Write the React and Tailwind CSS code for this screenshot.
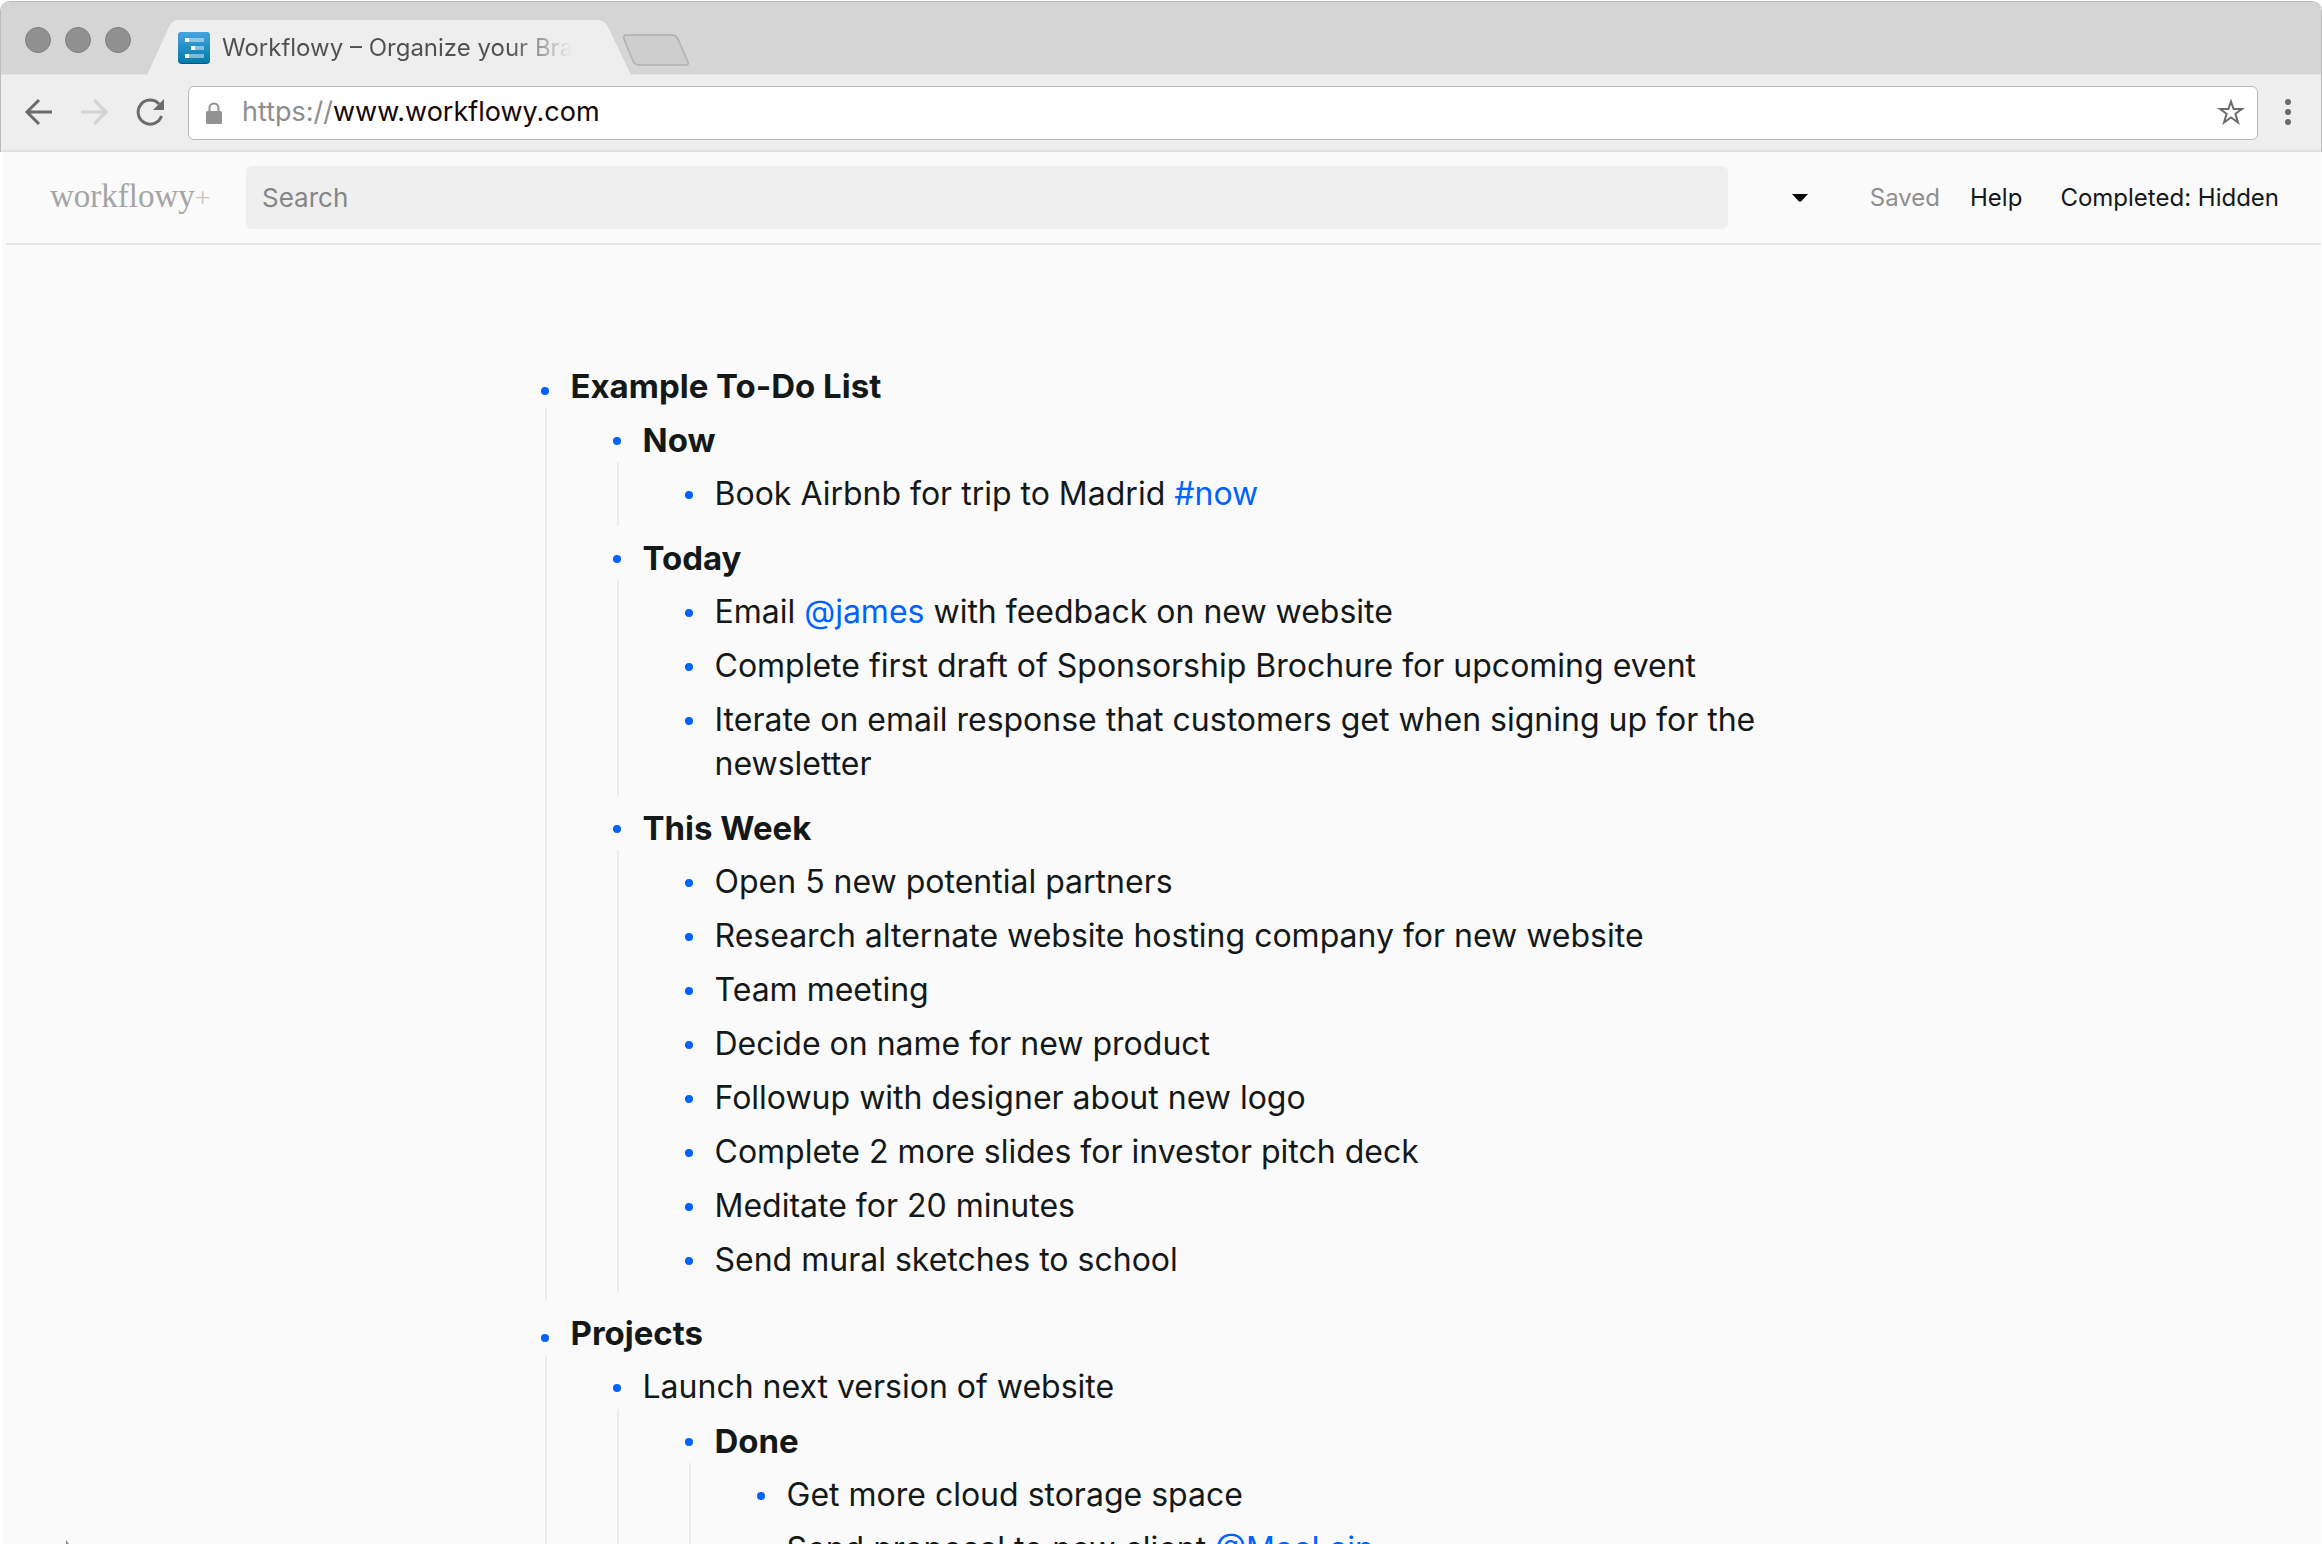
const outline = [
  {
    text: 'Example To-Do List', bold: true, children: [
      { text: 'Now', bold: true, children: [{ text: 'Book Airbnb for trip to Madrid #now' }] },
      {
        text: 'Today', bold: true, children: [
          { text: 'Email @james with feedback on new website' },
          { text: 'Complete first draft of Sponsorship Brochure for upcoming event' },
          { text: 'Iterate on email response that customers get when signing up for the newsletter' },
        ],
      },
      {
        text: 'This Week', bold: true, children: [
          { text: 'Open 5 new potential partners' },
          { text: 'Research alternate website hosting company for new website' },
          { text: 'Team meeting' },
          { text: 'Decide on name for new product' },
          { text: 'Followup with designer about new logo' },
          { text: 'Complete 2 more slides for investor pitch deck' },
          { text: 'Meditate for 20 minutes' },
          { text: 'Send mural sketches to school' },
        ],
      },
    ],
  },
  {
    text: 'Projects', bold: true, children: [
      {
        text: 'Launch next version of website', children: [
          {
            text: 'Done', bold: true, children: [
              { text: 'Get more cloud storage space' },
              { text: 'Send proposal to new client @MacLain' },
            ],
          },
        ],
      },
    ],
  },
];

function RichText({ text }) {
  return text.split(/([#@]\w+)/).map((part, i) =>
    /^[#@]/.test(part) ? <a key={i} href={'#' + part.slice(1)} className="text-[#0062ff]">{part}</a> : part
  );
}

function Item({ item, top }) {
  return (
    <li>
      <div className="flex items-start pt-[10px]">
        <button aria-label={'Zoom into ' + item.text} className={'mr-[22px] flex h-11 w-2 shrink-0 justify-center ' + (top ? 'pt-[23px]' : 'pt-[19px]')}>
          <span className="size-2 rounded-full bg-[#0062ff]" />
        </button>
        <p className={'min-w-0 ' + (item.bold ? 'text-[33px] leading-[44px] font-bold' : 'text-[32px] leading-[44px]')}><RichText text={item.text} /></p>
      </div>
      {item.children && (
        <ul className={'ml-1 border-l-2 border-[#ececec] pl-[66px] ' + (top ? 'pb-[9px]' : 'pb-[10px]')}>
          {item.children.map((c) => <Item key={c.text} item={c} />)}
        </ul>
      )}
    </li>
  );
}

function TabStrip() {
  return (
    <div className="flex h-[73px] items-end border-b border-[#e2e2e2] bg-[#d5d5d5] pl-6">
      <div className="flex gap-[14px] self-center pt-[3px]">
        {['Close', 'Minimize', 'Zoom'].map((n) => (
          <button key={n} aria-label={n} className="size-[26px] rounded-full border border-[#7e7e7e] bg-[#919191]" />
        ))}
      </div>
      <div className="relative -mb-px ml-4 h-[55px] w-[484px]">
        <svg viewBox="0 0 484 55" className="absolute inset-0 h-full w-full" aria-hidden="true">
          <path d="M0 55 L22 7 Q25 0 32 0 H450 Q458 0 461 7 L484 55Z" fill="#eeeeee" />
        </svg>
        <div className="relative flex h-full items-center pl-[31px] pt-px">
          <svg viewBox="0 0 32 32" className="size-8 shrink-0" aria-hidden="true">
            <defs>
              <linearGradient id="fav" x1="0" y1="0" x2="0" y2="1">
                <stop offset="0" stopColor="#48a4e2" />
                <stop offset="1" stopColor="#007ba7" />
              </linearGradient>
            </defs>
            <rect width="32" height="32" rx="4" fill="#00597f" />
            <rect width="32" height="31" rx="4" fill="url(#fav)" />
            <path d="M11 6H26V10H11ZM17 14H26V18H17ZM11 22H26V26H11Z" fill="#fff" fillOpacity=".45" />
            <path d="M7 6H11V10H7ZM13 14H17V18H13ZM7 22H11V26H7Z" fill="#fff" />
          </svg>
          <span className="ml-3 whitespace-nowrap bg-linear-to-r from-[#505050] from-80% to-[#eeeeee] to-98% bg-clip-text text-2xl text-transparent">Workflowy – Organize your Brai</span>
        </div>
      </div>
      <button aria-label="New tab" className="mb-[7px] -ml-[9px]">
        <svg viewBox="0 0 68 33" className="h-[33px] w-[68px]" aria-hidden="true">
          <path d="M4 1H50Q54 1 56 5L66 28Q67 31 64 31H17Q13 31 11 27L2 5Q1 1 4 1Z" fill="#cecece" stroke="#b0b0b0" strokeWidth="1.5" />
        </svg>
      </button>
    </div>
  );
}

function Toolbar() {
  return (
    <div className="flex h-[77px] items-center border-b-2 border-[#e0e0e0] bg-[#eeeeee] pl-[22px] pr-[25px]">
      <button aria-label="Back">
        <svg viewBox="0 0 32 32" className="size-8" fill="none" stroke="#6b6b6b" strokeWidth="3" aria-hidden="true"><path d="M29 15H4M16 3L4 15L16 27" /></svg>
      </button>
      <button aria-label="Forward" className="ml-6">
        <svg viewBox="0 0 32 32" className="size-8" fill="none" stroke="#d3d3d3" strokeWidth="3" aria-hidden="true"><path d="M2 15H27M15 3L27 15L15 27" /></svg>
      </button>
      <button aria-label="Reload" className="ml-6">
        <svg viewBox="0 0 32 32" className="size-8" fill="none" aria-hidden="true">
          <path d="M26.500 19A12 12 0 1 1 24 7" stroke="#6b6b6b" strokeWidth="3" />
          <path d="M29 2V13H18Z" fill="#6b6b6b" />
        </svg>
      </button>
      <div className="ml-[21px] flex h-[54px] min-w-0 flex-1 items-center rounded-md border border-[#b8b8b8] bg-white pl-[17px] pr-3">
        <svg viewBox="0 0 16 22" className="h-[22px] w-4" aria-hidden="true">
          <path d="M3.500 10V6A4.500 4.500 0 0 1 12.500 6V10" fill="none" stroke="#929292" strokeWidth="2" />
          <rect y="9" width="16" height="13" rx="1.500" fill="#929292" />
        </svg>
        <div className="ml-5 flex-1 text-[27px] text-[#160606]"><span className="text-[#8d8d8d]">https://</span>www.workflowy.com</div>
        <button aria-label="Bookmark this page">
          <svg viewBox="0 0 28 28" className="size-7" fill="none" stroke="#6b6b6b" strokeWidth="2" aria-hidden="true">
            <path d="M14 2.500L16.600 10H25L18.400 14.800L21 23.500L14 18.400L7 23.500L9.600 14.800L3 10H11.400Z" />
          </svg>
        </button>
      </div>
      <button aria-label="Menu" className="ml-[22px]">
        <svg viewBox="0 0 16 32" className="h-8 w-4" fill="#6b6b6b" aria-hidden="true"><circle cx="8" cy="5" r="3" /><circle cx="8" cy="15" r="3" /><circle cx="8" cy="25" r="3" /></svg>
      </button>
    </div>
  );
}

function Header() {
  return (
    <header className="ml-1 flex h-[93px] shrink-0 items-center border-b-2 border-[#e4e4ea] pl-[44px] pr-[42px] text-2xl text-[#131818]">
      <a href="#home" className="w-[196px] shrink-0 pb-1 font-['Liberation_Serif',serif] text-[33px] text-[#a5a5a5]">workflowy<span className="text-[28px] text-[#c4c4c4]">+</span></a>
      <input aria-label="Search" placeholder="Search" className="h-[63px] min-w-0 flex-1 rounded-md bg-[#efefef] px-4 text-[26px] placeholder:text-[#868686]" />
      <button aria-label="Account menu" className="ml-[64px]">
        <svg viewBox="0 0 16 8" className="h-2 w-4" aria-hidden="true"><path d="M0 0H16L9.500 7Q8 8.500 6.500 7Z" fill="#000" /></svg>
      </button>
      <span className="ml-[62px] text-[#8f8f8f]">Saved</span>
      <button className="ml-[30px]">Help</button>
      <button className="ml-[38px]">Completed: Hidden</button>
    </header>
  );
}

export default function App() {
  return (
    <div className="flex h-screen flex-col overflow-hidden bg-white pt-px font-['Inter',sans-serif]">
      <div className="shrink-0 overflow-hidden rounded-t-[10px] border border-b-0 border-[#bcbcbc]">
        <TabStrip />
        <Toolbar />
      </div>
      <div className="relative ml-0.5 mr-px flex min-h-0 flex-1 flex-col overflow-hidden bg-[#fafafa]">
        <Header />
        <main className="px-10 pt-[109px]">
          <ul className="mx-auto max-w-[1242px] text-[#131818]">
            {outline.map((item) => <Item key={item.text} item={item} top />)}
          </ul>
        </main>
        <svg viewBox="0 0 4 4" className="absolute bottom-0 left-16 size-1" aria-hidden="true"><path d="M0 0L3 4H0Z" fill="#8c8c8c" /></svg>
      </div>
    </div>
  );
}
